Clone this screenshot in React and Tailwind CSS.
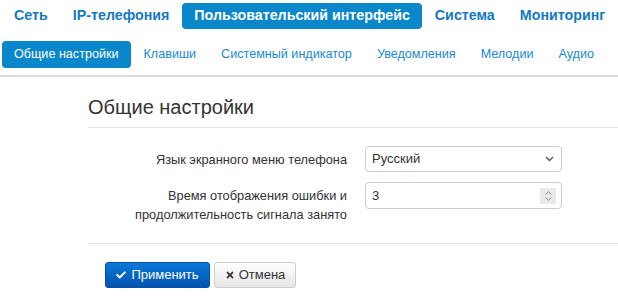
import { FaCheck, FaTimes } from 'react-icons/fa';

const topTabs = [
  { label: 'Сеть' },
  { label: 'IP-телефония' },
  { label: 'Пользовательский интерфейс', active: true },
  { label: 'Система' },
  { label: 'Мониторинг' },
];

const subTabs = [
  { label: 'Общие настройки', active: true },
  { label: 'Клавиши' },
  { label: 'Системный индикатор' },
  { label: 'Уведомления' },
  { label: 'Мелодии' },
  { label: 'Аудио' },
];

export default function App() {
  return (
    <div className="h-[301px] w-[618px] overflow-hidden bg-white font-['Liberation_Sans',Arial,sans-serif] text-[#333]">
      {/* Главное меню */}
      <ul className="flex pl-[2px] pt-[3px]">
        {topTabs.map((tab) => (
          <li
            key={tab.label}
            className={
              tab.active
                ? 'mr-[1px] flex h-[26px] items-center rounded-[4px] bg-[#0a86ca] px-3 text-[14.25px] font-bold whitespace-nowrap text-white'
                : 'mr-[1px] flex h-[26px] items-center px-3 text-[14.25px] font-bold whitespace-nowrap text-[#1479c2]'
            }
          >
            {tab.label}
          </li>
        ))}
      </ul>

      {/* Подменю */}
      <ul className="mt-[12px] flex pl-[2px]">
        {subTabs.map((tab) => (
          <li
            key={tab.label}
            className={
              tab.active
                ? 'mr-[1px] flex h-[27px] items-center rounded-[4px] bg-[#0a86ca] px-3 text-[12.6px] whitespace-nowrap text-white'
                : 'mr-[1px] flex h-[27px] items-center px-3 text-[12.6px] whitespace-nowrap text-[#2089d4]'
            }
          >
            {tab.label}
          </li>
        ))}
      </ul>
      <div className="mt-[7px] h-[2px] bg-[#dddddd]" />

      <div className="pl-[88px]">
        <h1 className="mt-[18px] text-[20px] leading-[24px] text-[#333]">Общие настройки</h1>
        <div className="mt-[8px] h-px bg-[#e5e5e5]" />

        <div className="mt-[18px] flex items-center">
          <label className="w-[259px] text-right text-[12.8px] leading-[19px]">Язык экранного меню телефона</label>
          <div className="ml-[18px] flex h-[26px] w-[197px] items-center justify-between rounded-[4px] border border-[#cccccc] pl-[6px] pr-[7px] text-[13px]">
            <span>Русский</span>
            <svg width="9" height="6" viewBox="0 0 9 6" fill="none">
              <path d="M1 1l3.5 3.5L8 1" stroke="#555" strokeWidth="1.4" />
            </svg>
          </div>
        </div>

        <div className="mt-[10px] flex items-start">
          <label className="w-[259px] pt-[4px] text-right text-[12.8px] leading-[19px]">
            Время отображения ошибки и
            <br />
            продолжительность сигнала занято
          </label>
          <div className="ml-[18px] flex h-[27px] w-[197px] items-center justify-between rounded-[4px] border border-[#cccccc] pl-[6px] pr-[5px] text-[13px]">
            <span>3</span>
            <div className="flex h-[16px] w-[16px] flex-col items-center justify-center gap-[2px] bg-[#e9e9ed]">
              <svg width="7" height="4" viewBox="0 0 7 4" fill="none">
                <path d="M0.5 3.5L3.5 0.8L6.5 3.5" stroke="#888" strokeWidth="1" />
              </svg>
              <svg width="7" height="4" viewBox="0 0 7 4" fill="none">
                <path d="M0.5 0.5L3.5 3.2L6.5 0.5" stroke="#888" strokeWidth="1" />
              </svg>
            </div>
          </div>
        </div>

        <div className="mt-[19px] h-px bg-[#e5e5e5]" />

        <div className="mt-[18px] flex gap-[4px] pl-[17px]">
          <button className="flex h-[26px] w-[105px] items-center justify-center gap-[5px] rounded-[3px] border border-[#0550a8] bg-gradient-to-b from-[#0a78d6] to-[#0453b0] text-[13px] text-white">
            <FaCheck className="h-[10px] w-[10px]" />
            Применить
          </button>
          <button className="flex h-[26px] w-[82px] items-center justify-center gap-[4px] rounded-[3px] border border-[#cccccc] bg-gradient-to-b from-white to-[#e6e6e6] text-[13px] text-[#333]">
            <FaTimes className="h-[10px] w-[10px]" />
            Отмена
          </button>
        </div>
      </div>
    </div>
  );
}
